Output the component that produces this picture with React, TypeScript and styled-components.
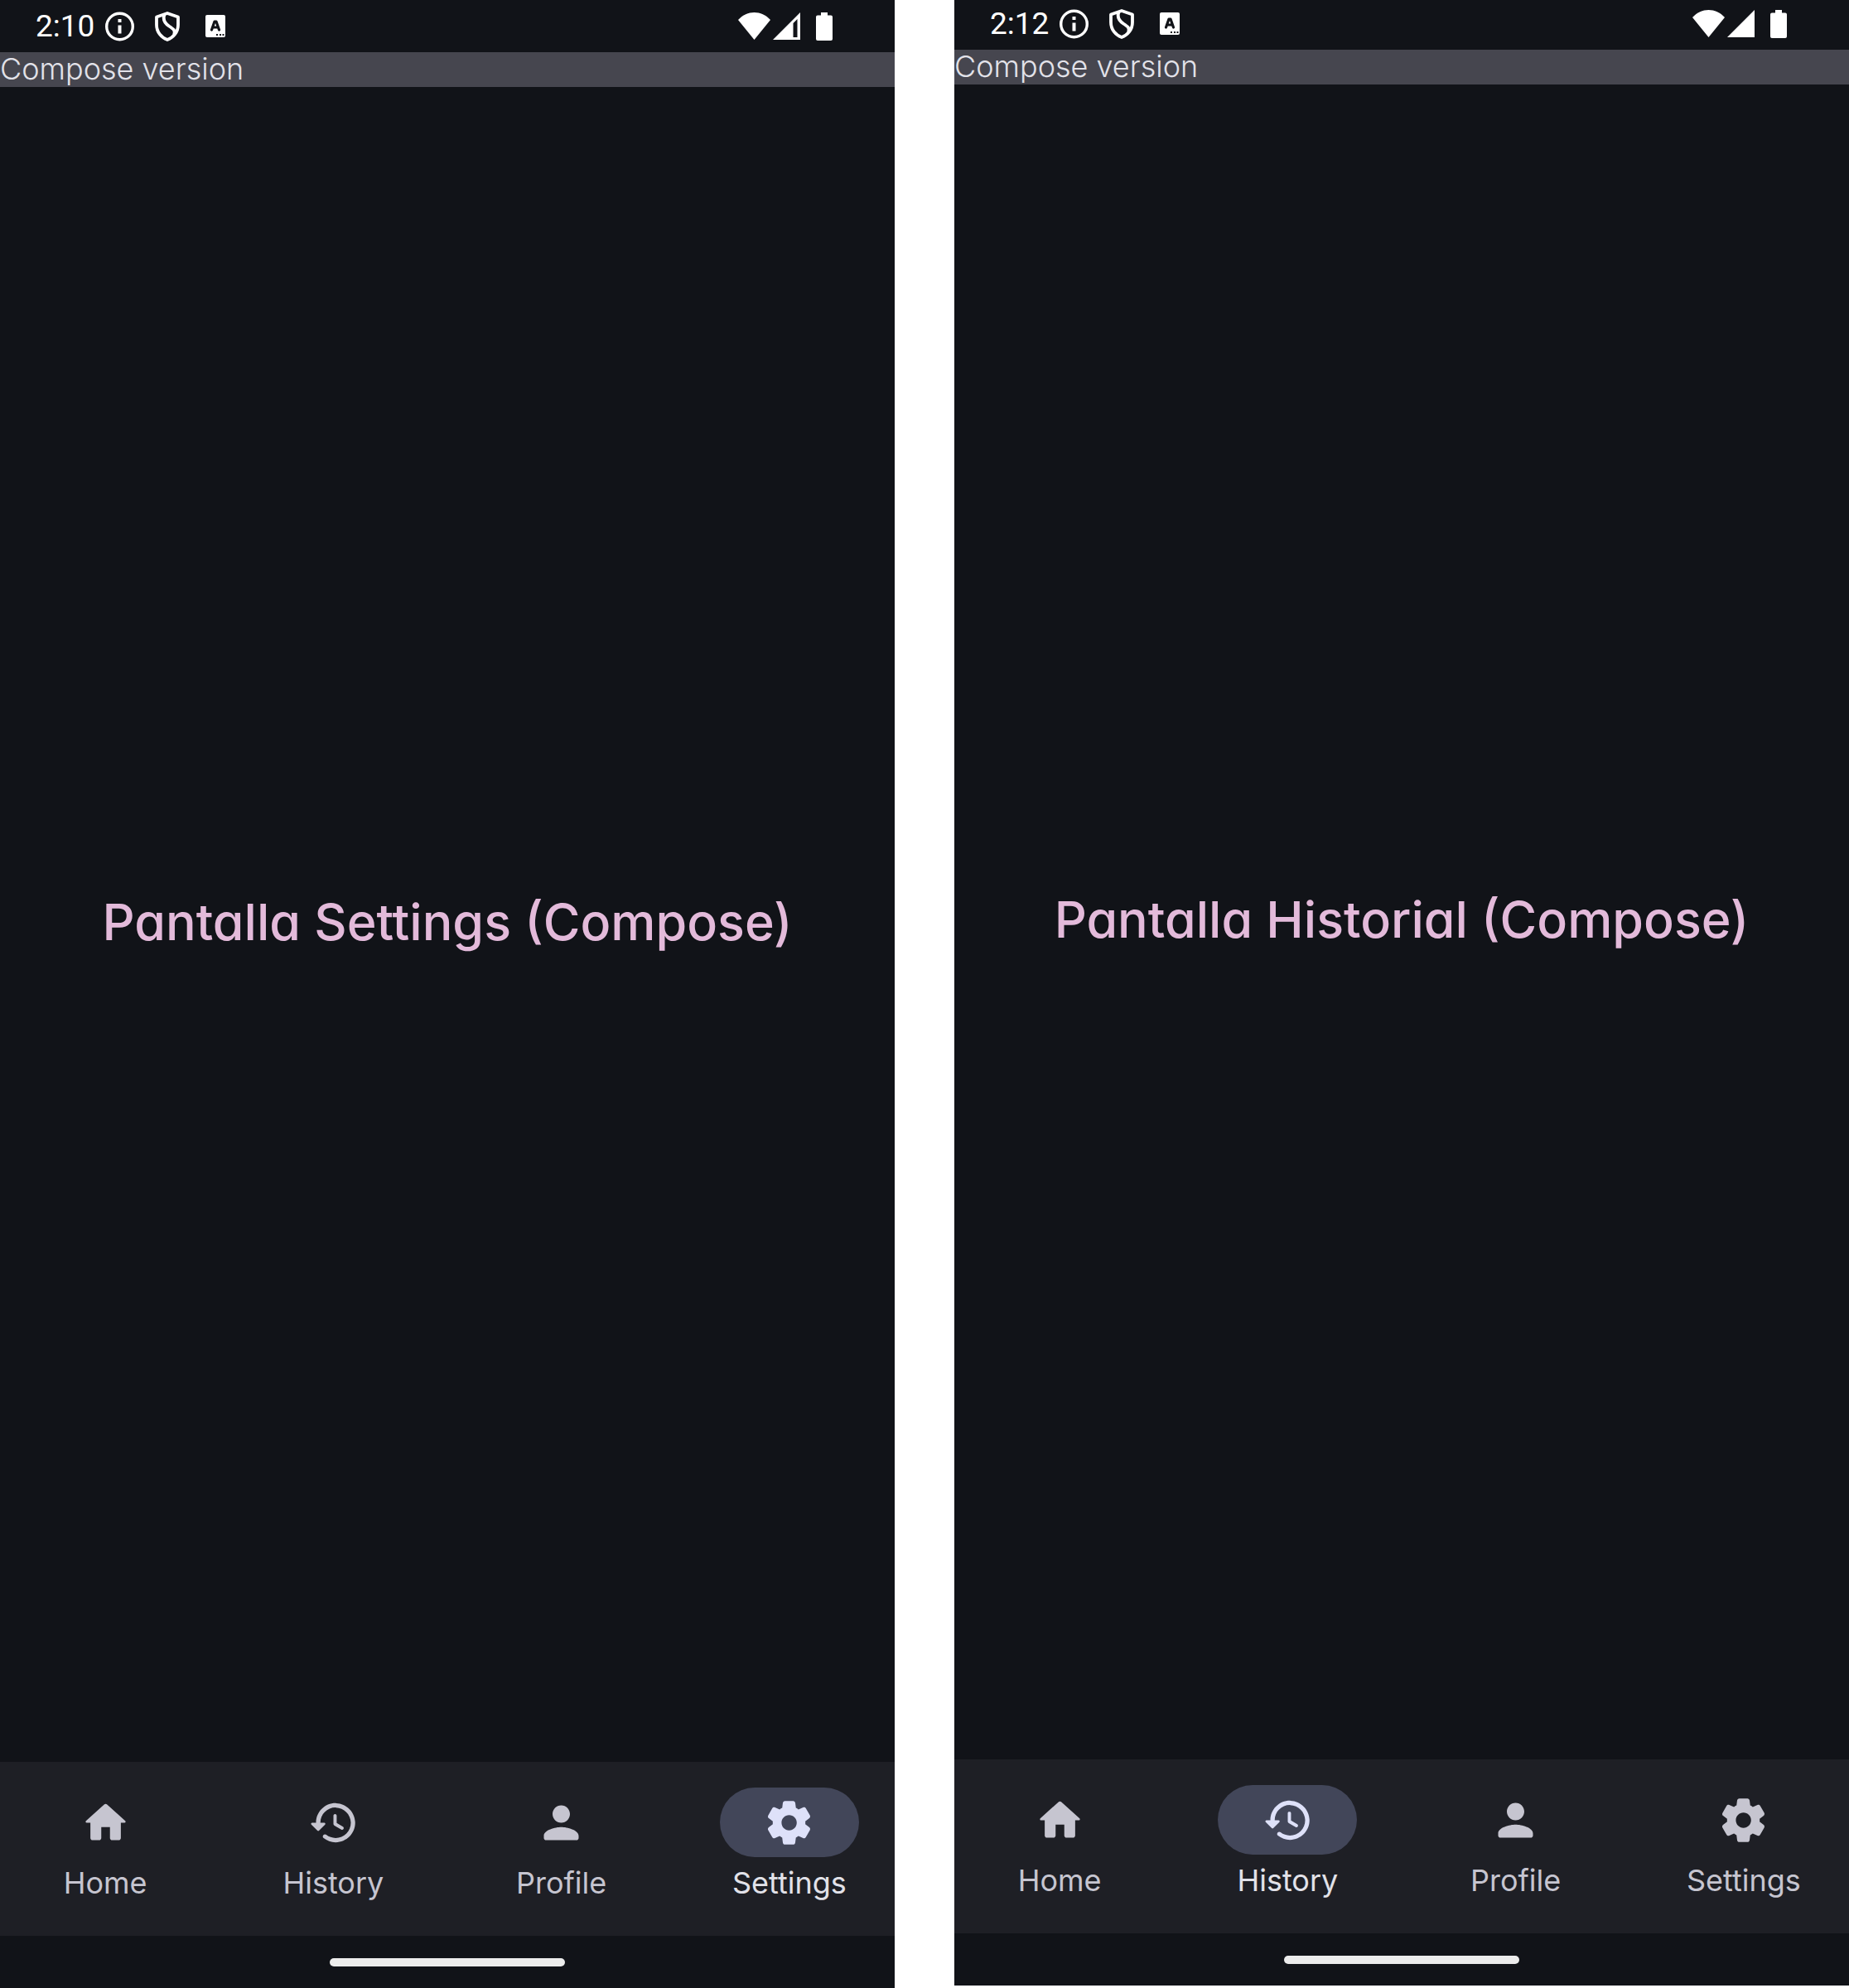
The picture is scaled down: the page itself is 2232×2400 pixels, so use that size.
import React from "react";
import styled, { createGlobalStyle } from "styled-components";

const Global = createGlobalStyle`
  *, *::before, *::after { box-sizing: border-box; }
  body { margin: 0; background: #ffffff; }
`;

const textFont = `Inter, "Liberation Sans", sans-serif`;

const Comparison = styled.main`
  display: grid;
  grid-template-columns: 1fr 1fr;
  column-gap: 72px;
  min-height: 100vh;
  overflow: hidden;
`;

const Phone = styled.section<{ $cropped: boolean }>`
  display: flex;
  flex-direction: column;
  min-width: 0;
  margin-bottom: ${(p) => (p.$cropped ? 3 : 0)}px;
  background: #111318;
  color: #e2e2e9;
  font-family: ${textFont};
  font-feature-settings: "cv11";
`;

const StatusBar = styled.header<{ $cropped: boolean }>`
  display: flex;
  flex: none;
  align-items: center;
  justify-content: space-between;
  height: ${(p) => (p.$cropped ? 60 : 63)}px;
  padding: 0 75px ${(p) => (p.$cropped ? 3 : 0)}px 43px;
  color: #ffffff;
`;

const StatusGroup = styled.div<{ $gap: number }>`
  display: flex;
  align-items: center;
  gap: ${(p) => p.$gap}px;
`;

const Clock = styled.time`
  width: 74px;
  font: 400 37px/42px Roboto, sans-serif;
`;

const Glyph = styled.svg`
  display: block;
  flex: none;
`;

const Strip = styled.div`
  flex: none;
  padding-bottom: 2px;
  background: #46464f;
  font-size: 36px;
  font-weight: 300;
  line-height: 40px;
`;

const Content = styled.div`
  display: flex;
  flex: 1;
  align-items: center;
  justify-content: center;
  padding-bottom: 6px;
`;

const Title = styled.h1`
  margin: 0;
  color: #e3bada;
  font-size: 61px;
  font-weight: 500;
  line-height: 84px;
  white-space: nowrap;
`;

const NavBar = styled.nav`
  display: grid;
  flex: none;
  grid-template-columns: repeat(4, 1fr);
  column-gap: 21px;
  height: 210px;
  background: #1e1f25;
`;

const NavButton = styled.button<{ $active: boolean }>`
  display: flex;
  flex-direction: column;
  align-items: center;
  gap: 10px;
  padding: 31px 0 0;
  border: 0;
  background: none;
  color: ${(p) => (p.$active ? "#e2e2e9" : "#c6c5d0")};
  font: 400 36px/42px ${textFont};
  font-feature-settings: inherit;
  cursor: pointer;
`;

const Indicator = styled.span<{ $active: boolean }>`
  display: flex;
  align-items: center;
  justify-content: center;
  width: 168px;
  height: 84px;
  border-radius: 42px;
  background: ${(p) => (p.$active ? "#424659" : "transparent")};
  color: ${(p) => (p.$active ? "#dee1f9" : "inherit")};
`;

const GestureArea = styled.footer`
  display: flex;
  flex: none;
  align-items: center;
  justify-content: center;
  height: 63px;
`;

const Handle = styled.div`
  width: 284px;
  height: 10px;
  border-radius: 5px;
  background: #ececec;
`;

const tabs = [
  {
    label: "Home",
    path: "M10 19v-5h4v5c0 .55.45 1 1 1h3c.55 0 1-.45 1-1v-7h1.7c.46 0 .68-.57.33-.87L12.67 3.6c-.38-.34-.96-.34-1.34 0l-8.36 7.53c-.34.3-.13.87.33.87H5v7c0 .55.45 1 1 1h3c.55 0 1-.45 1-1z",
  },
  {
    label: "History",
    path: "M13.26 3C8.17 2.86 4 6.95 4 12H2.21c-.45 0-.67.54-.35.85l2.79 2.8c.2.2.51.2.71 0l2.79-2.8c.31-.31.09-.85-.36-.85H6c0-3.9 3.18-7.05 7.1-7 3.72.05 6.85 3.18 6.9 6.9.05 3.91-3.1 7.1-7 7.1-1.61 0-3.1-.55-4.28-1.48-.4-.31-.96-.28-1.32.08-.42.42-.39 1.13.08 1.49C9 20.29 10.91 21 13 21c5.05 0 9.14-4.17 9-9.26-.13-4.69-4.05-8.61-8.74-8.74zm-.51 5c-.41 0-.75.34-.75.75v3.68c0 .35.19.68.49.86l3.12 1.85c.36.21.82.09 1.03-.26.21-.36.09-.82-.26-1.03l-2.88-1.71v-3.4c0-.4-.34-.74-.75-.74z",
  },
  {
    label: "Profile",
    path: "M12 12c2.21 0 4-1.79 4-4s-1.79-4-4-4-4 1.79-4 4 1.79 4 4 4zm0 2c-2.67 0-8 1.34-8 4v1c0 .55.45 1 1 1h14c.55 0 1-.45 1-1v-1c0-2.66-5.33-4-8-4z",
  },
  {
    label: "Settings",
    path: "M19.5 12c0-.23-.01-.45-.03-.68l1.86-1.41c.4-.3.51-.86.26-1.3l-1.87-3.23c-.25-.44-.79-.62-1.25-.42l-2.15.91c-.37-.26-.76-.49-1.17-.68l-.29-2.31C14.8 2.38 14.37 2 13.87 2h-3.73c-.51 0-.94.38-1 .88l-.29 2.31c-.41.19-.8.42-1.17.68l-2.15-.91c-.46-.2-1-.02-1.25.42L2.41 8.62c-.25.44-.14.99.26 1.3l1.86 1.41C4.51 11.55 4.5 11.77 4.5 12s.01.45.03.68l-1.86 1.41c-.4.3-.51.86-.26 1.3l1.87 3.23c.25.44.79.62 1.25.42l2.15-.91c.37.26.76.49 1.17.68l.29 2.31c.06.5.49.88.99.88h3.73c.5 0 .93-.38.99-.88l.29-2.31c.41-.19.8-.42 1.17-.68l2.15.91c.46.2 1 .02 1.25-.42l1.87-3.23c.25-.44.14-.99-.26-1.3l-1.86-1.41c.03-.23.04-.45.04-.68zM12.04 15.5c-1.93 0-3.5-1.57-3.5-3.5s1.57-3.5 3.5-3.5 3.5 1.57 3.5 3.5-1.57 3.5-3.5 3.5z",
  },
];

function InfoIcon() {
  return (
    <Glyph width="35" height="36" viewBox="0 0 35 36" aria-label="Information">
      <circle cx="17.5" cy="18" r="15.8" fill="none" stroke="currentColor" strokeWidth="3.4" />
      <path d="M15.5 9h4v4h-4zM15.5 16.5h4v10h-4z" fill="currentColor" />
    </Glyph>
  );
}

function ShieldIcon() {
  return (
    <Glyph width="30" height="36" viewBox="0 0 30 36" aria-label="Protection">
      <path
        d="M15 2 L28 6.5 V16 C28 25 22 31.500 15 34 C8 31.500 2 25 2 16 V6.500 Z M11.500 3.500 C9 10 12 14 17 17.500 C22.500 21 25 23 23 28"
        fill="none"
        stroke="currentColor"
        strokeWidth="3.8"
        strokeLinejoin="round"
      />
    </Glyph>
  );
}

function KeyboardIcon() {
  return (
    <Glyph width="24" height="27" viewBox="0 0 24 27" aria-label="Input method">
      <rect width="24" height="27" rx="2" fill="currentColor" />
      <path
        d="M7.500 18 L11 8 H13 L16.500 18 M9 15 H15"
        fill="none"
        stroke="#111318"
        strokeWidth="3.2"
        strokeLinecap="round"
        strokeLinejoin="round"
      />
      <path d="M13 23h2v2h-2zM17 23h2v2h-2zM20.500 23h2v2h-2z" fill="#111318" />
    </Glyph>
  );
}

function WifiIcon() {
  return (
    <Glyph width="39" height="33" viewBox="0 0 39 33" aria-label="Wi-Fi">
      <path d="M0 9 C11 -3 28 -3 39 9 L19.500 33 Z" fill="currentColor" />
    </Glyph>
  );
}

function SignalIcon({ partial }: { partial: boolean }) {
  return (
    <Glyph width="33" height="33" viewBox="0 0 33 33" aria-label="Mobile signal">
      <path
        d={partial ? "M0 33 L33 0 V33 Z M24.500 13 V30 H29.500 V8 Z" : "M0 33 L33 0 V33 Z"}
        fill="currentColor"
        fillRule="evenodd"
      />
    </Glyph>
  );
}

function BatteryIcon() {
  return (
    <Glyph width="20" height="34" viewBox="0 0 20 34" aria-label="Battery">
      <path d="M6 0h8v3.500h4q2 0 2 2V32q0 2-2 2H2q-2 0-2-2V5.500q0-2 2-2h4z" fill="currentColor" />
    </Glyph>
  );
}

interface ScreenProps {
  time: string;
  title: string;
  initialTab: string;
  partialSignal?: boolean;
  cropped?: boolean;
}

function Screen({ time, title, initialTab, partialSignal = false, cropped = false }: ScreenProps) {
  const [active, setActive] = React.useState(initialTab);
  return (
    <Phone $cropped={cropped}>
      <StatusBar $cropped={cropped}>
        <StatusGroup $gap={31}>
          <StatusGroup $gap={25}>
            <StatusGroup $gap={10}>
              <Clock>{time}</Clock>
              <InfoIcon />
            </StatusGroup>
            <ShieldIcon />
          </StatusGroup>
          <KeyboardIcon />
        </StatusGroup>
        <StatusGroup $gap={19}>
          <StatusGroup $gap={3}>
            <WifiIcon />
            <SignalIcon partial={partialSignal} />
          </StatusGroup>
          <BatteryIcon />
        </StatusGroup>
      </StatusBar>
      <Strip>Compose version</Strip>
      <Content>
        <Title>{title}</Title>
      </Content>
      <NavBar>
        {tabs.map((tab) => (
          <NavButton
            key={tab.label}
            type="button"
            $active={tab.label === active}
            aria-current={tab.label === active ? "page" : undefined}
            onClick={() => setActive(tab.label)}
          >
            <Indicator $active={tab.label === active}>
              <Glyph width="63" height="63" viewBox="0 0 24 24" fill="currentColor" aria-hidden="true">
                <path d={tab.path} />
              </Glyph>
            </Indicator>
            {tab.label}
          </NavButton>
        ))}
      </NavBar>
      <GestureArea>
        <Handle />
      </GestureArea>
    </Phone>
  );
}

export default function App() {
  return (
    <>
      <Global />
      <Comparison>
        <Screen time="2:10" title="Pantalla Settings (Compose)" initialTab="Settings" partialSignal />
        <Screen time="2:12" title="Pantalla Historial (Compose)" initialTab="History" cropped />
      </Comparison>
    </>
  );
}
